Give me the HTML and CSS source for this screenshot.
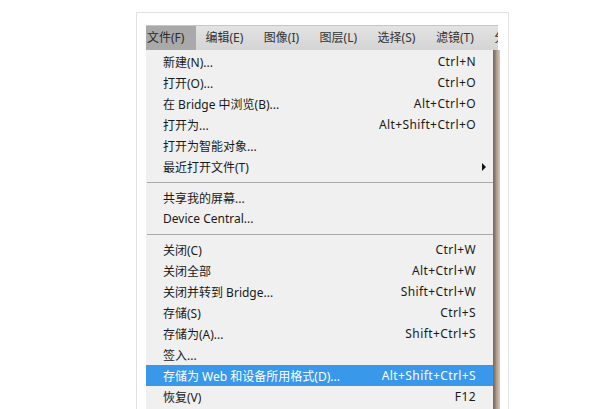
FILE: index.html
```html
<!DOCTYPE html>
<html lang="zh-CN">
<head>
<meta charset="utf-8">
<title>文件菜单</title>
<link rel="stylesheet" href="styles.css">
</head>
<body>
<div class="frame">
  <div class="app">
    <div class="menubar">
      <span class="mb-item first active">文件(F)</span>
      <span class="mb-item">编辑(E)</span>
      <span class="mb-item">图像(I)</span>
      <span class="mb-item">图层(L)</span>
      <span class="mb-item">选择(S)</span>
      <span class="mb-item">滤镜(T)</span>
      <span class="mb-item">分</span>
    </div>
    <div class="body-row">
      <div class="menu">
        <div class="row"><span class="label">新建(N)...</span><span class="key">Ctrl+N</span><span class="arr"></span></div>
        <div class="row"><span class="label">打开(O)...</span><span class="key">Ctrl+O</span><span class="arr"></span></div>
        <div class="row"><span class="label">在 Bridge 中浏览(B)...</span><span class="key">Alt+Ctrl+O</span><span class="arr"></span></div>
        <div class="row"><span class="label">打开为...</span><span class="key">Alt+Shift+Ctrl+O</span><span class="arr"></span></div>
        <div class="row"><span class="label">打开为智能对象...</span><span class="key"></span><span class="arr"></span></div>
        <div class="row"><span class="label">最近打开文件(T)</span><span class="key"></span><span class="arr"><span class="tri"></span></span></div>
        <div class="sep"></div>
        <div class="row"><span class="label">共享我的屏幕...</span><span class="key"></span><span class="arr"></span></div>
        <div class="row"><span class="label">Device Central...</span><span class="key"></span><span class="arr"></span></div>
        <div class="sep"></div>
        <div class="row"><span class="label">关闭(C)</span><span class="key">Ctrl+W</span><span class="arr"></span></div>
        <div class="row"><span class="label">关闭全部</span><span class="key">Alt+Ctrl+W</span><span class="arr"></span></div>
        <div class="row"><span class="label">关闭并转到 Bridge...</span><span class="key">Shift+Ctrl+W</span><span class="arr"></span></div>
        <div class="row"><span class="label">存储(S)</span><span class="key">Ctrl+S</span><span class="arr"></span></div>
        <div class="row"><span class="label">存储为(A)...</span><span class="key">Shift+Ctrl+S</span><span class="arr"></span></div>
        <div class="row"><span class="label">签入...</span><span class="key"></span><span class="arr"></span></div>
        <div class="row hl"><span class="label">存储为 Web 和设备所用格式(D)...</span><span class="key">Alt+Shift+Ctrl+S</span><span class="arr"></span></div>
        <div class="row"><span class="label">恢复(V)</span><span class="key">F12</span><span class="arr"></span></div>
      </div>
      <div class="canvas-strip"></div>
    </div>
  </div>
</div>
</body>
</html>
```
FILE: styles.css
```css
html, body {
  margin: 0;
  padding: 0;
  background: #ffffff;
  overflow: hidden;
}
body {
  font-family: "Noto Sans", "Noto Sans CJK SC", sans-serif;
  color: #1a1a1a;
}
.frame {
  margin: 12px 0 0 136px;
  width: 373px;
  height: 397px;
  border: 1px solid #e2e2e2;
  border-bottom: none;
  padding: 12px 0 0 9px;
  box-sizing: border-box;
  background: #fff;
}
.app {
  width: 354px;
}
.menubar {
  width: 352px;
  height: 25px;
  display: flex;
  align-items: stretch;
  overflow: hidden;
  white-space: nowrap;
  background: linear-gradient(#e3e3e3, #d4d4d4);
  border-top: 1px solid #c6c6c6;
  box-sizing: border-box;
}
.mb-item {
  font-size: 12px;
  line-height: 24px;
  color: #333;
  padding: 0 11.5px 0 9px;
  flex: none;
}
.mb-item.first {
  padding-left: 1px;
  padding-right: 12px;
}
.mb-item.active {
  background: #a9a9a9;
  color: #2a2a2a;
}
.body-row {
  display: flex;
}
.menu {
  width: 347px;
  background: #f0f0f0;
  padding-top: 1px;
  height: 359px;
}
.row {
  display: grid;
  grid-template-columns: 1fr auto 17px;
  height: 21px;
  align-items: center;
  padding-left: 17px;
  font-size: 12px;
  white-space: nowrap;
}
.row.hl {
  background: #3a98eb;
  color: #ffffff;
}
.key {
  text-align: right;
  letter-spacing: 0.4px;
}
.arr {
  display: flex;
  align-items: center;
  padding-left: 6px;
}
.tri {
  width: 0;
  height: 0;
  border-top: 4px solid transparent;
  border-bottom: 4px solid transparent;
  border-left: 4px solid #111;
}
.sep {
  height: 10px;
  display: flex;
  align-items: center;
  padding-left: 1px;
}
.sep::before {
  content: "";
  display: block;
  width: 100%;
  height: 1px;
  background: #a9a9a9;
}
.canvas-strip {
  width: 7px;
  height: 359px;
  background: linear-gradient(90deg, #6f6a65 0, #8a7f74 2px, #b7a58e 4px, #d9c9b2 7px);
}
```
